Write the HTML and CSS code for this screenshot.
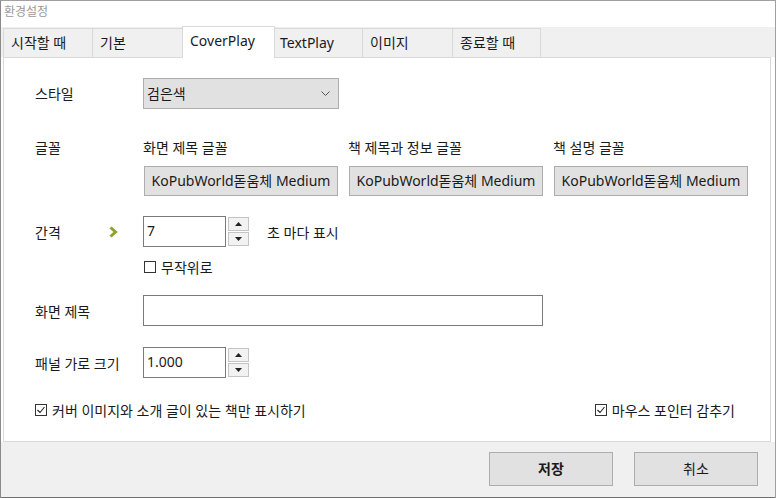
FILE: index.html
```html
<!DOCTYPE html>
<html lang="ko">
<head>
<meta charset="utf-8">
<title>환경설정</title>
<link rel="stylesheet" href="styles.css">
</head>
<body>
<div class="window">
  <div class="titlebar">환경설정</div>
  <div class="tabs">
    <div class="tab w89">시작할 때</div>
    <div class="tab w90">기본</div>
    <div class="tab sel w92">CoverPlay</div>
    <div class="tab w88 tight">TextPlay</div>
    <div class="tab w90">이미지</div>
    <div class="tab w88">종료할 때</div>
  </div>
  <div class="page">
    <div class="row r-style">
      <div class="label">스타일</div>
      <div class="select"><span>검은색</span>
        <svg class="chev" width="9" height="6" viewBox="0 0 9 6"><polyline points="0.5,0.5 4.5,4.5 8.5,0.5" fill="none" stroke="#555" stroke-width="1"/></svg>
      </div>
    </div>
    <div class="row r-fontlbl">
      <div class="label">글꼴</div>
      <div class="fcol">화면 제목 글꼴</div>
      <div class="fcol">책 제목과 정보 글꼴</div>
      <div class="fcol">책 설명 글꼴</div>
    </div>
    <div class="row r-fontbtn">
      <div class="label"></div>
      <div class="fcol"><div class="fbtn">KoPubWorld돋움체 Medium</div></div>
      <div class="fcol"><div class="fbtn">KoPubWorld돋움체 Medium</div></div>
      <div class="fcol"><div class="fbtn">KoPubWorld돋움체 Medium</div></div>
    </div>
    <div class="row r-interval">
      <div class="label lbl-arrow">간격
        <svg class="arrow" width="9" height="12" viewBox="0 0 9 12"><polyline points="1.5,1.5 6.5,6 1.5,10.5" fill="none" stroke="#8fa32a" stroke-width="3"/></svg>
      </div>
      <div class="spin">
        <div class="num">7</div>
        <div class="spinbtns">
          <div class="sb"><svg width="7" height="4" viewBox="0 0 7 4"><polygon points="3.5,0 7,4 0,4" fill="#222"/></svg></div>
          <div class="sb"><svg width="7" height="4" viewBox="0 0 7 4"><polygon points="0,0 7,0 3.5,4" fill="#222"/></svg></div>
        </div>
      </div>
      <div class="after">초 마다 표시</div>
    </div>
    <div class="row r-random">
      <div class="label"></div>
      <div class="check"><span class="box"></span>무작위로</div>
    </div>
    <div class="row r-title">
      <div class="label">화면 제목</div>
      <div class="text"></div>
    </div>
    <div class="row r-panel">
      <div class="label">패널 가로 크기</div>
      <div class="spin">
        <div class="num">1.000</div>
        <div class="spinbtns">
          <div class="sb"><svg width="7" height="4" viewBox="0 0 7 4"><polygon points="3.5,0 7,4 0,4" fill="#222"/></svg></div>
          <div class="sb"><svg width="7" height="4" viewBox="0 0 7 4"><polygon points="0,0 7,0 3.5,4" fill="#222"/></svg></div>
        </div>
      </div>
    </div>
    <div class="row r-bottom">
      <div class="check"><span class="box"><svg width="10" height="10" viewBox="0 0 10 10"><polyline points="1.5,5 4,7.5 8.5,2" fill="none" stroke="#222" stroke-width="1.1"/></svg></span>커버 이미지와 소개 글이 있는 책만 표시하기</div>
      <div class="check"><span class="box"><svg width="10" height="10" viewBox="0 0 10 10"><polyline points="1.5,5 4,7.5 8.5,2" fill="none" stroke="#222" stroke-width="1.1"/></svg></span>마우스 포인터 감추기</div>
    </div>
  </div>
  <div class="footer">
    <div class="btn bold">저장</div>
    <div class="btn">취소</div>
  </div>
</div>
</body>
</html>
```

FILE: styles.css
```css
html, body {
  margin: 0;
  padding: 0;
  background: #ffffff;
}
body {
  width: 776px;
  height: 498px;
  overflow: hidden;
  font-family: "Noto Sans", "Noto Sans CJK KR", sans-serif;
  font-size: 14px;
  color: #1a1a1a;
}
.window {
  box-sizing: border-box;
  width: 776px;
  height: 498px;
  border-left: 1px solid #8a8a8a;
  border-top: 1px solid #a0a0a0;
  border-right: 1px solid #a0a0a0;
  display: flex;
  flex-direction: column;
  background: #ffffff;
}
.titlebar {
  height: 26px;
  line-height: 22px;
  padding-left: 3px;
  font-size: 12px;
  color: #9a9a9a;
}
.tabs {
  height: 30px;
  background: #f0f0f0;
  display: flex;
  align-items: flex-end;
  padding-left: 2px;
  position: relative;
  z-index: 2;
}
.tab {
  box-sizing: border-box;
  height: 29px;
  line-height: 27px;
  padding-left: 7px;
  background: #f0f0f0;
  border: 1px solid #d9d9d9;
  border-bottom: none;
  margin-right: -1px;
  color: #1a1a1a;
}
.tab.tight { padding-left: 5px; }
.tab.sel {
  height: 32px;
  line-height: 27px;
  background: #ffffff;
  margin-bottom: -1px;
  position: relative;
  z-index: 3;
  margin-top: -2px;
}
.w89 { width: 90px; }
.w90 { width: 91px; }
.w92 { width: 93px; }
.w88 { width: 89px; }
.page {
  box-sizing: border-box;
  margin-left: 2px;
  width: 768px;
  height: 385px;
  border: 1px solid #d9d9d9;
  background: #ffffff;
  padding-left: 31px;
  padding-top: 20px;
  display: flex;
  flex-direction: column;
}
.row {
  display: flex;
  align-items: center;
}
.label {
  width: 108px;
  flex: none;
}
.r-style { height: 30px; }
.select {
  box-sizing: border-box;
  width: 196px;
  height: 31px;
  background: #e1e1e1;
  border: 1px solid #adadad;
  display: flex;
  align-items: center;
  justify-content: space-between;
  padding: 0 8px 0 3px;
}
.chev { margin-top: 1px; }
.r-fontlbl { height: 20px; margin-top: 29px; }
.fcol { width: 205px; flex: none; }
.r-fontbtn { height: 30px; margin-top: 9px; }
.fbtn {
  box-sizing: border-box;
  width: 194px;
  height: 30px;
  margin-left: 1px;
  background: #e1e1e1;
  border: 1px solid #adadad;
  text-align: center;
  line-height: 27px;
  white-space: nowrap;
}
.r-interval { height: 31px; margin-top: 20px; }
.lbl-arrow {
  display: flex;
  align-items: center;
}
.arrow { margin-left: 48px; margin-top: 1px; }
.spin {
  display: flex;
  align-items: center;
  gap: 2px;
}
.num {
  box-sizing: border-box;
  width: 83px;
  height: 31px;
  border: 1px solid #7a7a7a;
  padding-left: 3px;
  line-height: 28px;
}
.spinbtns {
  display: flex;
  flex-direction: column;
  gap: 1px;
}
.sb {
  box-sizing: border-box;
  width: 21px;
  height: 14px;
  background: #f2f2f2;
  border: 1px solid #c4c4c4;
  display: flex;
  align-items: center;
  justify-content: center;
}
.after { margin-left: 18px; }
.r-random { height: 18px; margin-top: 11px; }
.check {
  display: flex;
  align-items: center;
}
.box {
  box-sizing: border-box;
  width: 12px;
  height: 12px;
  border: 1px solid #333333;
  margin-right: 5px;
  margin-left: 1px;
  display: flex;
  align-items: center;
  justify-content: center;
  background: #ffffff;
}
.r-title { height: 31px; margin-top: 19px; }
.text {
  box-sizing: border-box;
  width: 400px;
  height: 31px;
  border: 1px solid #7a7a7a;
}
.r-panel { height: 31px; margin-top: 21px; }
.r-bottom {
  height: 18px;
  margin-top: 23px;
  justify-content: space-between;
  padding-right: 35px;
}
.r-bottom .box { margin-left: 0; }
.footer {
  flex: 1;
  background: #f0f0f0;
  display: flex;
  justify-content: flex-end;
  align-items: flex-start;
  padding-top: 10px;
  padding-right: 17px;
  gap: 21px;
  border-bottom: 1px solid #707070;
}
.btn {
  box-sizing: border-box;
  width: 124px;
  height: 34px;
  background: #e1e1e1;
  border: 1px solid #adadad;
  text-align: center;
  line-height: 31px;
}
.bold { font-weight: bold; }
```
